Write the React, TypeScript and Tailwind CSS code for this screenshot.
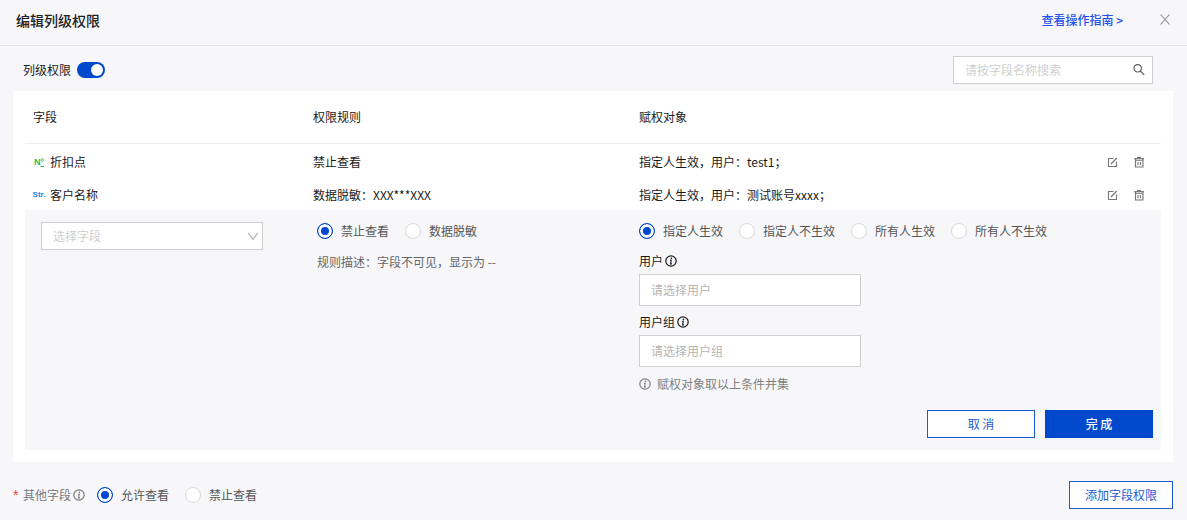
import { useState } from "react";

type FieldKind = "number" | "string";

const permissions: { id: number; kind: FieldKind; field: string; rule: string; target: string }[] = [
  { id: 1, kind: "number", field: "折扣点", rule: "禁止查看", target: "指定人生效，用户：test1；" },
  { id: 2, kind: "string", field: "客户名称", rule: "数据脱敏：XXX***XXX", target: "指定人生效，用户：测试账号xxxx；" },
];

const ruleOptions = ["禁止查看", "数据脱敏"];
const targetOptions = ["指定人生效", "指定人不生效", "所有人生效", "所有人不生效"];
const otherOptions = ["允许查看", "禁止查看"];

function InfoIcon() {
  return (
    <svg viewBox="0 0 12 12" className="size-3 shrink-0" fill="none" aria-hidden="true">
      <circle cx="6" cy="6" r="5.2" stroke="currentColor" strokeWidth="1.2" />
      <circle cx="6.4" cy="3.4" r="0.8" fill="currentColor" />
      <path d="M4.9 5.3h1.3L5.6 8.9H7" stroke="currentColor" strokeWidth="1.1" />
    </svg>
  );
}

function EditIcon() {
  return (
    <svg viewBox="0 0 12 12" className="size-3" fill="none" stroke="currentColor" aria-hidden="true">
      <path d="M7.5 2.5H2.5v8H10.5V5.5" strokeWidth="1.1" />
      <path d="M5 8 10.8 2" strokeWidth="1.2" />
    </svg>
  );
}

function TrashIcon() {
  return (
    <svg viewBox="0 0 12 12" className="size-3" fill="none" stroke="currentColor" aria-hidden="true">
      <path d="M4 1.5h4" strokeWidth="1" />
      <path d="M1.2 2.7h9.8" strokeWidth="1.3" />
      <path d="M2.5 3v8h7.4V3" strokeWidth="1.2" />
      <path d="M5 6v3.2M7.4 6v3.2" strokeWidth="1.1" />
      <path d="M3 4.5h6.5" strokeWidth="0.8" />
    </svg>
  );
}

function FieldIcon({ kind }: { kind: FieldKind }) {
  return kind === "number" ? (
    <span className="flex w-3 justify-center font-['Liberation_Sans'] text-[9px] font-bold text-[#13c25a]">
      N<span className="underline">º</span>
    </span>
  ) : (
    <span className="flex w-3 justify-center font-['Liberation_Sans'] text-[8px] font-bold text-[#2b80f5]">Str.</span>
  );
}

function RadioGroup({ name, options }: { name: string; options: string[] }) {
  const [value, setValue] = useState(options[0]);

  return (
    <div role="radiogroup" className="flex flex-wrap gap-4 leading-[18px] text-[#555555]">
      {options.map((option) => (
        <label key={option} className="flex items-center gap-2">
          <input
            type="radio"
            name={name}
            checked={value === option}
            onChange={() => setValue(option)}
            className="size-4 shrink-0 appearance-none rounded-full border border-[#d9d9d9] bg-white checked:border-[#0049cc] checked:bg-[#0049cc] checked:shadow-[inset_0_0_0_3px_#fff]"
          />
          {option}
        </label>
      ))}
    </div>
  );
}

export default function App() {
  const [enabled, setEnabled] = useState(true);

  return (
    <div className="min-h-screen bg-[#f7f7f9] font-['Noto_Sans_CJK_SC',sans-serif] text-xs leading-5 text-[#1a1a1a]">
      <header className="flex h-[46px] items-center justify-between border-b border-[#e4e4e7] px-4 pb-[5px]">
        <h1 className="text-sm leading-5 font-medium text-[#222222]">编辑列级权限</h1>
        <div className="flex items-center gap-9">
          <a href="#guide" className="font-medium text-[#2450f0]">
            查看操作指南 &gt;
          </a>
          <button type="button" aria-label="关闭" className="text-[#8c8c8c]">
            <svg viewBox="0 0 12 12" className="size-3" fill="none" stroke="currentColor" strokeWidth="1.1">
              <path d="M1.5 0.5 10.5 10.5M10.5 0.5 1.5 10.5" />
            </svg>
          </button>
        </div>
      </header>

      <main className="pr-[14px] pl-[13px]">
        <div className="flex items-center justify-between pt-[10px] pr-5 pb-[7px] pl-[10px]">
          <label className="flex items-center gap-[6px]">
            列级权限
            <input
              type="checkbox"
              role="switch"
              checked={enabled}
              onChange={(e) => setEnabled(e.target.checked)}
              className="flex h-4 w-7 appearance-none items-center rounded-full bg-[#bfbfbf] p-0.5 before:size-3 before:rounded-full before:bg-white checked:justify-end checked:bg-[#0049cc]"
            />
          </label>
          <div className="relative">
            <input
              type="text"
              aria-label="请按字段名称搜索"
              placeholder="请按字段名称搜索"
              className="block h-7 w-[200px] border border-[#d0d0d0] bg-white pr-7 pb-px pl-[11px] placeholder:text-[#cfcfcf]"
            />
            <svg
              viewBox="0 0 12 12"
              className="pointer-events-none absolute top-2 right-2 size-3 text-[#555555]"
              fill="none"
              stroke="currentColor"
              strokeWidth="1.1"
            >
              <circle cx="4.7" cy="4.3" r="3.7" />
              <path d="M7.3 7 11.2 10.8" />
            </svg>
          </div>
        </div>

        <section className="bg-white px-3 pb-3">
          <table className="w-full table-fixed border-separate border-spacing-0 text-left">
            <colgroup>
              <col className="w-[280px]" />
              <col className="w-[326px]" />
              <col />
              <col className="w-20" />
            </colgroup>
            <thead>
              <tr className="h-[53px]">
                <th className="border-b border-[#eeeeee] px-2 font-normal">字段</th>
                <th className="border-b border-[#eeeeee] px-2 font-normal">权限规则</th>
                <th className="border-b border-[#eeeeee] px-2 font-normal">赋权对象</th>
                <th className="border-b border-[#eeeeee]" aria-label="操作" />
              </tr>
            </thead>
            <tbody>
              {permissions.map((item) => (
                <tr key={item.id} className="leading-5">
                  <td className="px-2 pt-2 pb-[5px]">
                    <div className="flex gap-[5px]">
                      <FieldIcon kind={item.kind} />
                      {item.field}
                    </div>
                  </td>
                  <td className="px-2 pt-2 pb-[5px]">{item.rule}</td>
                  <td className="px-2 pt-2 pb-[5px]">{item.target}</td>
                  <td className="pt-2 pr-4 pb-[5px]">
                    <div className="flex justify-end gap-[15px] text-[#777777]">
                      <button type="button" aria-label="编辑">
                        <EditIcon />
                      </button>
                      <button type="button" aria-label="删除">
                        <TrashIcon />
                      </button>
                    </div>
                  </td>
                </tr>
              ))}
              <tr className="bg-[#f7f7f9] align-top">
                <td className="px-4 py-3">
                  <div className="relative w-[222px]">
                    <select
                      aria-label="选择字段"
                      defaultValue=""
                      className="block h-7 w-full appearance-none border border-[#d0d0d0] bg-white px-[11px] text-[#cfcfcf]"
                    >
                      <option value="">选择字段</option>
                      <option>折扣点</option>
                      <option>客户名称</option>
                    </select>
                    <svg
                      viewBox="0 0 12 12"
                      className="pointer-events-none absolute top-2 right-1 size-3 text-[#b5b5b5]"
                      fill="none"
                      stroke="currentColor"
                      strokeWidth="1.2"
                    >
                      <path d="M1.2 2.8 6 9.4 10.8 2.8" />
                    </svg>
                  </div>
                </td>
                <td className="px-3 py-3">
                  <RadioGroup name="rule" options={ruleOptions} />
                  <p className="mt-3 text-[#666666]">规则描述：字段不可见，显示为 --</p>
                </td>
                <td colSpan={2} className="px-2 py-3">
                  <RadioGroup name="target" options={targetOptions} />
                  <label htmlFor="user" className="mt-3 flex items-center gap-0.5 leading-[18px]">
                    用户
                    <InfoIcon />
                  </label>
                  <input
                    id="user"
                    placeholder="请选择用户"
                    className="mt-1 block h-8 w-[222px] border border-[#d0d0d0] bg-white px-[11px] pb-px placeholder:text-[#b5b5b5]"
                  />
                  <label htmlFor="group" className="mt-[7px] flex items-center gap-0.5 leading-[18px]">
                    用户组
                    <InfoIcon />
                  </label>
                  <input
                    id="group"
                    placeholder="请选择用户组"
                    className="mt-1 block h-8 w-[222px] border border-[#d0d0d0] bg-white px-[11px] pb-px placeholder:text-[#b5b5b5]"
                  />
                  <p className="mt-[7px] flex items-center gap-[6px] text-[#808080]">
                    <InfoIcon />
                    赋权对象取以上条件并集
                  </p>
                  <div className="mt-4 flex justify-end gap-[10px]">
                    <button type="button" className="h-7 w-[108px] border border-[#1d5bd0] bg-white text-[#1d5bd0]">
                      取 消
                    </button>
                    <button type="button" className="h-7 w-[108px] bg-[#0049cc] font-medium text-white shadow-xs">
                      完 成
                    </button>
                  </div>
                </td>
              </tr>
            </tbody>
          </table>
        </section>

        <footer className="flex items-center justify-between pt-[19px] pb-[11px]">
          <div className="flex items-center gap-3">
            <span className="flex items-center gap-0.5 text-[#777777]">
              <span className="w-2 font-['Liberation_Sans'] text-sm text-[#ff3b30]">*</span>
              其他字段
              <InfoIcon />
            </span>
            <RadioGroup name="other" options={otherOptions} />
          </div>
          <button type="button" className="h-7 border border-[#1d5bd0] bg-white px-[15px] text-[#1d5bd0]">
            添加字段权限
          </button>
        </footer>
      </main>
    </div>
  );
}
